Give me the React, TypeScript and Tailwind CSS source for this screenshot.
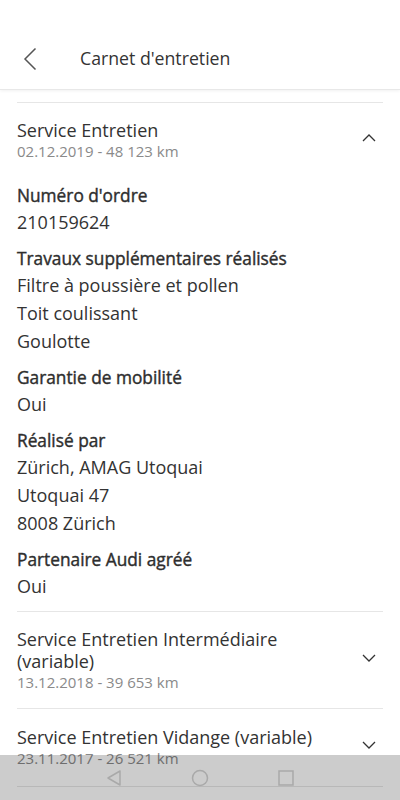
type Field = { label: string; values: string[] };

const fields: Field[] = [
  { label: "Numéro d'ordre", values: ["210159624"] },
  {
    label: "Travaux supplémentaires réalisés",
    values: ["Filtre à poussière et pollen", "Toit coulissant", "Goulotte"],
  },
  { label: "Garantie de mobilité", values: ["Oui"] },
  { label: "Réalisé par", values: ["Zürich, AMAG Utoquai", "Utoquai 47", "8008 Zürich"] },
  { label: "Partenaire Audi agréé", values: ["Oui"] },
];

function Chevron({ up }: { up?: boolean }) {
  return (
    <svg width="14" height="8" viewBox="0 0 14 8">
      <path
        d={up ? "M1 7 7 1l6 6" : "M1 1l6 6 6-6"}
        fill="none"
        stroke="#333"
        strokeWidth="1.3"
      />
    </svg>
  );
}

function SectionHeader({
  title,
  date,
  open,
  pt,
}: {
  title: string;
  date: string;
  open?: boolean;
  pt: string;
}) {
  return (
    <div className={`flex items-center ${pt}`}>
      <div className="flex-1 pr-8">
        <div className="text-[18px] leading-[22px] text-[#333]">{title}</div>
        <div className="text-[15px] leading-[21px] text-[#8a8a8a]">{date}</div>
      </div>
      <div className="-mt-[6px] mr-[7px]">
        <Chevron up={open} />
      </div>
    </div>
  );
}

export default function App() {
  return (
    <div
      className="relative w-[400px] h-[800px] overflow-hidden bg-white"
      style={{ fontFamily: "'Open Sans', 'Noto Sans', sans-serif" }}
    >
      <header className="h-[90px] pt-[28px] flex items-center border-b border-[#e8e8e8] shadow-[0_1px_3px_rgba(0,0,0,0.06)]">
        <svg width="14" height="24" viewBox="0 0 14 24" className="ml-[23px]">
          <path d="M12.5 1.5 2 12l10.5 10.5" fill="none" stroke="#555" strokeWidth="1.5" />
        </svg>
        <h1 className="ml-[43px] text-[17.7px] text-[#333]">Carnet d'entretien</h1>
      </header>

      <div className="px-[17px]">
        <div className="mt-[12px] border-t border-[#e6e6e6]" />

        <SectionHeader pt="pt-[16px]" title="Service Entretien" date="02.12.2019 - 48 123 km" open />

        <div className="flex flex-col gap-[11px] pt-[22px] pb-[11px]">
          {fields.map((f) => (
            <div key={f.label}>
              <div className="text-[17.3px] leading-[24px] text-[#2e2e2e] [-webkit-text-stroke:0.4px_#2e2e2e]">
                {f.label}
              </div>
              {f.values.map((v) => (
                <div key={v} className="text-[18px] leading-[28px] text-[#333]">
                  {v}
                </div>
              ))}
            </div>
          ))}
        </div>

        <div className="border-t border-[#e6e6e6]" />
        <div className="pb-[15px]">
          <SectionHeader
            pt="pt-[16px]"
            title="Service Entretien Intermédiaire (variable)"
            date="13.12.2018 - 39 653 km"
          />
        </div>

        <div className="border-t border-[#e6e6e6]" />
        <div className="pb-[17px]">
          <SectionHeader
            pt="pt-[17px]"
            title="Service Entretien Vidange (variable)"
            date="23.11.2017 - 26 521 km"
          />
        </div>
        <div className="border-t border-[#e6e6e6]" />
      </div>

      <nav className="absolute bottom-0 left-0 right-0 h-[45px] bg-black/20 flex items-center justify-center gap-[68px]">
        <svg width="18" height="18" viewBox="0 0 18 18">
          <path d="M15 2v14L3 9z" fill="none" stroke="#a9a9a9" strokeWidth="1.5" strokeLinejoin="round" />
        </svg>
        <svg width="18" height="18" viewBox="0 0 18 18">
          <circle cx="9" cy="9" r="7.5" fill="none" stroke="#a9a9a9" strokeWidth="1.5" />
        </svg>
        <svg width="18" height="18" viewBox="0 0 18 18">
          <rect x="2" y="2" width="14" height="14" fill="none" stroke="#a9a9a9" strokeWidth="1.5" />
        </svg>
      </nav>
    </div>
  );
}
